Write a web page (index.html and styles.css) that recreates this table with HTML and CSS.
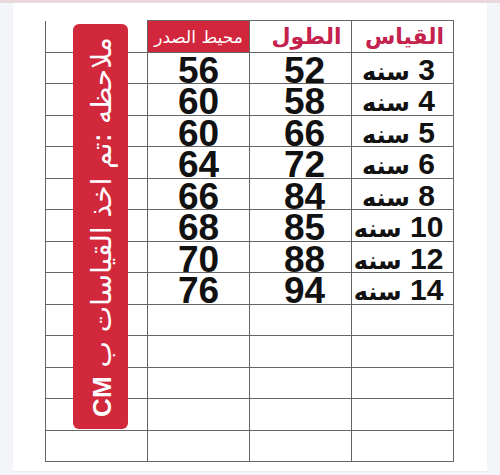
FILE: index.html
```html
<!DOCTYPE html>
<html lang="ar">
<head>
<meta charset="utf-8">
<title>جدول القياسات</title>
<link rel="stylesheet" href="styles.css">
</head>
<body>
<div class="page">
  <div class="topbar"></div>
  <div class="card">
    <div class="chart">
      <table class="grid">
        <tr class="head">
          <td class="note-col"></td>
          <td class="chest-head"><div class="cell">محيط الصدر</div></td>
          <td class="head-red"><div class="cell len-head">الطول</div></td>
          <td class="head-red"><div class="cell size-head">القياس</div></td>
        </tr>
        <tr><td></td><td><div class="cell num">56</div></td><td><div class="cell num len">52</div></td><td><div class="cell size" dir="rtl"><b>3</b> <span class="yr">سنه</span></div></td></tr>
        <tr><td></td><td><div class="cell num">60</div></td><td><div class="cell num len">58</div></td><td><div class="cell size" dir="rtl"><b>4</b> <span class="yr">سنه</span></div></td></tr>
        <tr><td></td><td><div class="cell num">60</div></td><td><div class="cell num len">66</div></td><td><div class="cell size" dir="rtl"><b>5</b> <span class="yr">سنه</span></div></td></tr>
        <tr><td></td><td><div class="cell num">64</div></td><td><div class="cell num len">72</div></td><td><div class="cell size" dir="rtl"><b>6</b> <span class="yr">سنه</span></div></td></tr>
        <tr><td></td><td><div class="cell num">66</div></td><td><div class="cell num len">84</div></td><td><div class="cell size" dir="rtl"><b>8</b> <span class="yr">سنه</span></div></td></tr>
        <tr><td></td><td><div class="cell num">68</div></td><td><div class="cell num len">85</div></td><td><div class="cell size" dir="rtl"><b>10</b> <span class="yr">سنه</span></div></td></tr>
        <tr><td></td><td><div class="cell num">70</div></td><td><div class="cell num len">88</div></td><td><div class="cell size" dir="rtl"><b>12</b> <span class="yr">سنه</span></div></td></tr>
        <tr><td></td><td><div class="cell num">76</div></td><td><div class="cell num len">94</div></td><td><div class="cell size" dir="rtl"><b>14</b> <span class="yr">سنه</span></div></td></tr>
        <tr><td></td><td></td><td></td><td></td></tr>
        <tr><td></td><td></td><td></td><td></td></tr>
        <tr><td></td><td></td><td></td><td></td></tr>
        <tr><td></td><td></td><td></td><td></td></tr>
        <tr><td></td><td></td><td></td><td></td></tr>
      </table>
      <div class="banner"><span class="banner-text" dir="rtl">ملاحظه :تم اخذ القياسات ب <b class="cm">CM</b></span></div>
    </div>
  </div>
</div>
</body>
</html>
```
FILE: styles.css
```css
html, body {
  margin: 0;
  padding: 0;
}
body {
  background: #f4f5f8;
  font-family: "Liberation Sans", "DejaVu Sans", sans-serif;
  width: 500px;
  height: 475px;
  overflow: hidden;
}
.page {
  width: 500px;
  height: 475px;
  display: flex;
  flex-direction: column;
  align-items: center;
}
.topbar {
  width: 500px;
  height: 3px;
  background: #ead9dc;
  flex: none;
}
.card {
  width: 474px;
  height: 469px;
  background: #ffffff;
  box-sizing: border-box;
  padding: 17px 0 0 32px;
  border-bottom: 1px solid #ececef;
}
.chart {
  position: relative;
  width: 404px;
}
.grid {
  border-collapse: collapse;
  table-layout: fixed;
  width: 404px;
}
.grid td {
  width: 101px;
  height: 30.5px;
  padding: 0;
  border: 1.5px solid #666666;
  vertical-align: top;
  text-align: center;
}
.grid tr.head td.note-col {
  border-top: none;
}
.cell {
  height: 30px;
  overflow: visible;
  white-space: nowrap;
}
.chest-head {
  background: #d2263d;
  color: #ffffff;
}
.chest-head .cell {
  font-family: "DejaVu Sans", sans-serif;
  font-size: 17px;
  line-height: 32px;
}
.head-red .cell {
  color: #c4214c;
  font-family: "DejaVu Sans", sans-serif;
  font-weight: bold;
  font-size: 22px;
  line-height: 31px;
}
.len-head {
  padding-left: 12px;
}
.size-head {
  padding-left: 4px;
}
.num {
  font-weight: bold;
  font-size: 37px;
  line-height: 35.5px;
  color: #111111;
}
.len {
  padding-left: 8px;
}
.size {
  font-size: 30px;
  line-height: 33px;
  color: #111111;
  padding-right: 8px;
}
.size b {
  font-weight: bold;
}
.yr {
  font-family: "DejaVu Sans", sans-serif;
  font-weight: bold;
  font-size: 24px;
}
.banner {
  position: absolute;
  left: 28px;
  top: 4px;
  width: 55px;
  height: 405px;
  background: #d2283c;
  border-radius: 6px;
  overflow: hidden;
}
.banner-text {
  position: absolute;
  left: 50%;
  top: 50%;
  width: 405px;
  text-align: center;
  white-space: nowrap;
  color: #ffffff;
  font-family: "DejaVu Sans", sans-serif;
  font-size: 28px;
  transform: translate(-50%, -50%) rotate(-90deg);
}
.cm {
  font-family: "Liberation Sans", sans-serif;
  font-size: 26px;
  font-weight: bold;
}
```
